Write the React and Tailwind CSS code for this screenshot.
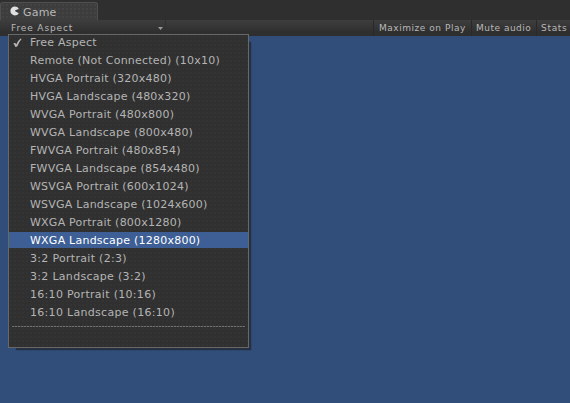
const items = [
  'Free Aspect',
  'Remote (Not Connected) (10x10)',
  'HVGA Portrait (320x480)',
  'HVGA Landscape (480x320)',
  'WVGA Portrait (480x800)',
  'WVGA Landscape (800x480)',
  'FWVGA Portrait (480x854)',
  'FWVGA Landscape (854x480)',
  'WSVGA Portrait (600x1024)',
  'WSVGA Landscape (1024x600)',
  'WXGA Portrait (800x1280)',
  'WXGA Landscape (1280x800)',
  '3:2 Portrait (2:3)',
  '3:2 Landscape (3:2)',
  '16:10 Portrait (10:16)',
  '16:10 Landscape (16:10)',
];
const selected = 11;

function GameIcon() {
  return (
    <svg className="mt-[3px] h-[10px] w-[9px] shrink-0" viewBox="0 0 9 10">
      <path d="M7.6 1.2 Q6.3 0.4 4.8 0.4 A4.4 4.5 0 1 0 4.8 9.4 Q7.6 9.4 8.8 7.2 L5.2 5.3 V4.2 L8.8 3 Z" fill="#e0e0e0" />
    </svg>
  );
}

function Check() {
  return (
    <svg className="h-[10px] w-[9px]" viewBox="0 0 9 10">
      <path d="M0.3 5.4 L2.2 4.8 L3.2 6.4 Q5 2.5 7.6 0.6 L8.6 0.9 Q5.8 4 4.2 8.6 L2.4 9 Q1.6 6.6 0.3 5.4 Z" fill="#b8b8b8" />
    </svg>
  );
}

function Toolbar() {
  return (
    <div className="flex h-4 bg-linear-to-b from-[#3e3e3e] to-[#2f2f2f] to-75% text-[9px] leading-4 text-[#b8b8b8]">
      <div className="flex w-[166px] items-center justify-between border-r border-[#303030] pr-[2px] pl-[11px]">
        <span className="tracking-[0.88px]">Free Aspect</span>
        <svg className="h-[3px] w-[5px]" viewBox="0 0 5 3">
          <path d="M0 0H5L2.5 3Z" fill="#999999" />
        </svg>
      </div>
      <div className="flex-1" />
      <div className="w-[98px] border-l border-[#292929] pl-[5px] tracking-[0.53px] whitespace-nowrap">Maximize on Play</div>
      <div className="w-[65px] border-l border-[#292929] pl-[4px] tracking-[0.5px] whitespace-nowrap">Mute audio</div>
      <div className="w-[34px] border-l border-[#292929] pl-[4px] tracking-[0.7px] whitespace-nowrap">Stats</div>
    </div>
  );
}

function Menu() {
  return (
    <div className="absolute top-[34px] left-2 h-[314px] w-[241px] border border-[#686868] bg-[#303030] bg-[radial-gradient(#373737_0.6px,transparent_0.8px)] bg-size-[4px_4px] text-[11px] text-[#b4b4b4] shadow-[5px_5px_1px_-3px_#263041]">
      <div className="flex flex-col gap-[2px]">
        {items.map((label, i) => (
          <div
            key={label}
            className={`flex items-center whitespace-nowrap ${i === 0 ? 'h-[15px]' : 'h-4'} ${i > 11 ? 'tracking-[0.3px]' : 'tracking-[0.23px]'} ${i === selected ? 'bg-[#3e5f96] text-white' : ''}`}
          >
            <div className="w-[21px] pl-1">{i === 0 && <Check />}</div>
            <span className={i === 0 ? 'leading-4' : 'pt-[2px] leading-4'}>{label}</span>
          </div>
        ))}
      </div>
      <div className="mx-[3px] mt-[6px] h-px bg-[repeating-linear-gradient(90deg,#707070_0_2px,#484848_2px_3px)]" />
    </div>
  );
}

export default function App() {
  return (
    <div className="relative flex h-[403px] w-[570px] flex-col overflow-hidden bg-[#2f2f2f] font-['DejaVu_Sans',sans-serif]">
      <div className="flex h-5 pt-[2px]">
        <div className="flex w-[98px] rounded-t-[3px] border border-b-0 border-[#505050] bg-[#3d3d3d] bg-[radial-gradient(#4b4b4b_0.6px,transparent_0.8px)] bg-size-[4px_4px] pl-[9px] text-[11px] text-[#b8b8b8]">
          <GameIcon />
          <span className="pl-[4px] leading-[19px] tracking-[0.2px]">Game</span>
        </div>
      </div>
      <Toolbar />
      <div className="flex-1 bg-[#304e79]" />
      <Menu />
    </div>
  );
}
